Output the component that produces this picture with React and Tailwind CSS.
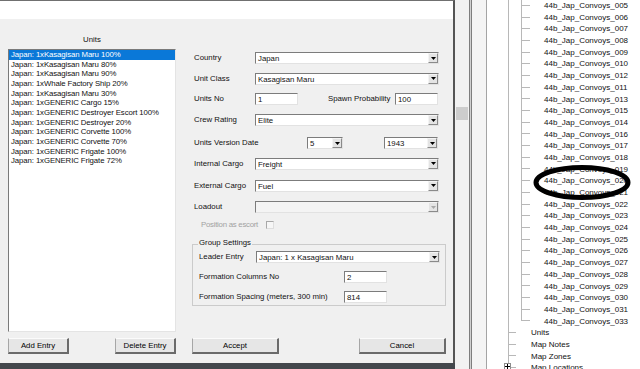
import React from 'react'

const units = [
  'Japan: 1xKasagisan Maru 100%',
  'Japan: 1xKasagisan Maru 80%',
  'Japan: 1xKasagisan Maru 90%',
  'Japan: 1xWhale Factory Ship 20%',
  'Japan: 1xKasagisan Maru 30%',
  'Japan: 1xGENERIC Cargo 15%',
  'Japan: 1xGENERIC Destroyer Escort 100%',
  'Japan: 1xGENERIC Destroyer 20%',
  'Japan: 1xGENERIC Corvette 100%',
  'Japan: 1xGENERIC Corvette 70%',
  'Japan: 1xGENERIC Frigate 100%',
  'Japan: 1xGENERIC Frigate 72%',
]

const convoys = [
  '005', '006', '007', '008', '009', '010', '012', '011', '013', '015', '014', '016', '017', '018',
  '019', '020', '021', '022', '023', '024', '025', '026', '027', '028', '029', '030', '031', '033',
]

const topLevel = ['Units', 'Map Notes', 'Map Zones', 'Map Locations']

function Arrow({ disabled }) {
  return (
    <div className="w-[10px] h-full flex items-center justify-center bg-[#e4e4e4] border-l border-t border-l-[#f4f4f4] border-t-[#f4f4f4] border-r border-b border-r-[#8a8a8a] border-b-[#8a8a8a]">
      <svg width="5" height="3" viewBox="0 0 5 3">
        <path d="M0 0H5L2.5 3Z" fill={disabled ? '#a8a8a8' : '#000'} />
      </svg>
    </div>
  )
}

function Combo({ value, w = 'w-[184px]', disabled }) {
  return (
    <div
      className={`${w} h-[12px] flex border-t border-l border-t-[#7c7c7c] border-l-[#7c7c7c] border-r border-b border-r-[#e2e2e2] border-b-[#e2e2e2] ${
        disabled ? 'bg-[#f4f4f4]' : 'bg-white'
      }`}
    >
      <span className="flex-1 pl-[2px] leading-[11px] whitespace-nowrap overflow-hidden">{value}</span>
      <Arrow disabled={disabled} />
    </div>
  )
}

function Field({ value, w = 'w-[43px]' }) {
  return (
    <div className={`${w} h-[12px] bg-white border-t border-l border-t-[#7c7c7c] border-l-[#7c7c7c] border-r border-b border-r-[#e2e2e2] border-b-[#e2e2e2] pl-[2px] leading-[11px]`}>
      {value}
    </div>
  )
}

function Btn({ children, w }) {
  return (
    <button
      className={`${w} h-[16px] bg-[#e6e6e6] border-t border-l border-t-[#fbfbfb] border-l-[#a6a6a6] border-r-2 border-b-2 border-r-[#6a6a6a] border-b-[#6a6a6a] leading-[13px] text-[7.8px] text-black`}
    >
      {children}
    </button>
  )
}

function Row({ label, lw = 'w-[63px]', children }) {
  return (
    <div className="h-[12px] flex items-center">
      <span className={`${lw} pl-[2px] whitespace-nowrap`}>{label}</span>
      {children}
    </div>
  )
}

export default function App() {
  return (
    <div className="relative w-[640px] h-[369px] overflow-hidden flex bg-white text-[7.8px] text-[#111] font-['Liberation_Sans',Arial,sans-serif]">
      {/* dialog */}
      <div className="w-[455px] h-full flex flex-col">
        <div className="h-[363px] flex flex-col border-t border-t-[#707070] border-r-2 border-r-[#555]">
          <div className="h-[18px] bg-white" />
          <div className="flex-1 bg-[#f0f0f0] flex">
            {/* units column */}
            <div className="w-[176px] pl-[8px] flex flex-col">
              <div className="mt-[16px] h-[10px] leading-[10px] text-center">Units</div>
              <div className="mt-[4px] h-[283px] bg-white border-t border-l border-t-[#7a7a7a] border-l-[#7a7a7a] border-r border-b border-r-[#e4e4e4] border-b-[#e4e4e4]">
                {units.map((u, i) => (
                  <div
                    key={i}
                    className={`h-[9.67px] leading-[9.67px] pl-[2px] whitespace-nowrap tracking-[-0.1px] ${
                      i === 0 ? 'bg-[#0a78d8] text-white' : ''
                    }`}
                  >
                    {u}
                  </div>
                ))}
              </div>
              <div className="mt-[6px] flex justify-between">
                <Btn w="w-[61px]">Add Entry</Btn>
                <Btn w="w-[61px]">Delete Entry</Btn>
              </div>
            </div>

            {/* form column */}
            <div className="ml-[16px] w-[254px] pt-[33px] flex flex-col">
              <Row label="Country">
                <Combo value="Japan" />
              </Row>
              <div className="mt-[8.5px]">
                <Row label="Unit Class">
                  <Combo value="Kasagisan Maru" />
                </Row>
              </div>
              <div className="mt-[8.5px]">
                <Row label="Units No">
                  <Field value="1" />
                  <span className="ml-[30px] w-[67px] whitespace-nowrap">Spawn Probability</span>
                  <Field value="100" />
                </Row>
              </div>
              <div className="mt-[9px]">
                <Row label="Crew Rating">
                  <Combo value="Elite" />
                </Row>
              </div>
              <div className="mt-[11px]">
                <Row label="Units Version Date" lw="w-[115px]">
                  <Combo value="5" w="w-[36px]" />
                  <div className="ml-[41px]">
                    <Combo value="1943" w="w-[54px]" />
                  </div>
                </Row>
              </div>
              <div className="mt-[8.5px]">
                <Row label="Internal Cargo">
                  <Combo value="Freight" />
                </Row>
              </div>
              <div className="mt-[10px]">
                <Row label="External Cargo">
                  <Combo value="Fuel" />
                </Row>
              </div>
              <div className="mt-[9.5px]">
                <Row label="Loadout">
                  <Combo value="" disabled />
                </Row>
              </div>
              <div className="mt-[7px] h-[10px] flex items-center pl-[9px]">
                <span className="w-[65px] text-[#a2a2a2] whitespace-nowrap tracking-[-0.25px]">Position as escort</span>
                <div className="w-[8px] h-[8px] bg-[#f6f6f6] border-t border-l border-t-[#a8a8a8] border-l-[#a8a8a8] border-r border-b border-r-[#dedede] border-b-[#dedede]" />
              </div>

              <div className="relative mt-[14px] h-[62px] border border-[#cbcbcb] pl-[6px] pt-[6px] flex flex-col">
                <span className="absolute -top-[7px] left-[5px] px-[1px] h-[10px] leading-[10px] bg-[#f0f0f0]">
                  Group Settings
                </span>
                <div className="h-[12px] flex items-center">
                  <span className="w-[57px] whitespace-nowrap">Leader Entry</span>
                  <Combo value="Japan: 1 x Kasagisan Maru" />
                </div>
                <div className="mt-[8px] h-[12px] flex items-center">
                  <span className="w-[145px] whitespace-nowrap">Formation Columns No</span>
                  <Field value="2" />
                </div>
                <div className="mt-[8px] h-[12px] flex items-center">
                  <span className="w-[145px] whitespace-nowrap">Formation Spacing (meters, 300 min)</span>
                  <Field value="814" />
                </div>
              </div>

              <div className="mt-[32px] flex justify-between">
                <Btn w="w-[87px]">Accept</Btn>
                <Btn w="w-[87px]">Cancel</Btn>
              </div>
            </div>
          </div>
        </div>
        <div className="flex-1 bg-[#43474c]" />
      </div>

      {/* strip between dialog and tree */}
      <div className="w-[14px] h-full bg-[#f2f2f2] flex flex-col">
        <div className="mt-[107px] mx-[1px] h-[13px] bg-[#cdcdcd]" />
      </div>
      <div className="w-[1px] h-full bg-[#7e7e7e]" />
      <div className="w-[1px] h-full bg-[#d0d0d0]" />
      <div className="w-[1px] h-full bg-[#7e7e7e]" />
      <div className="w-[14px] h-full bg-[#f4f4f4]" />
      <div className="w-[1px] h-full bg-[#a4a4a4]" />

      {/* tree */}
      <div className="flex-1 h-full bg-white pl-[21px]">
        <div className="h-full border-l border-l-[#b8b8b8] flex flex-col">
          <div className="ml-[12px] flex flex-col">
            {convoys.map((c, i) => (
              <div key={c} className="h-[11.7px] flex">
                <div className="w-[9px] h-full flex flex-col">
                  <div className="h-1/2 border-l border-b border-[#b8b8b8]" />
                  <div className={`h-1/2 ${i === convoys.length - 1 ? '' : 'border-l border-[#b8b8b8]'}`} />
                </div>
                <span className="ml-[14px] text-[8px] leading-[11.7px] whitespace-nowrap">44b_Jap_Convoys_{c}</span>
              </div>
            ))}
          </div>
          {topLevel.map((t, i) => (
            <div key={t} className="relative h-[11.7px] flex">
              <div className="w-[7px] h-full">
                <div className="h-1/2 border-b border-[#b8b8b8]" />
              </div>
              <span className="ml-[15px] text-[8px] leading-[11.7px] whitespace-nowrap">{t}</span>
              {i === topLevel.length - 1 && (
                <div className="absolute -left-[5px] top-[1px] w-[7px] h-[7px] bg-white border border-[#8c8c8c] flex items-center justify-center">
                  <svg width="5" height="5" viewBox="0 0 5 5">
                    <path d="M0 2.5H5M2.5 0V5" stroke="#000" strokeWidth="1" />
                  </svg>
                </div>
              )}
            </div>
          ))}
        </div>
      </div>

      {/* hand-drawn annotation */}
      <svg className="absolute left-[532px] top-[164px]" width="100" height="37" viewBox="0 0 100 37">
        <ellipse cx="50" cy="18.5" rx="46" ry="15" fill="none" stroke="#000" strokeWidth="5" />
      </svg>
    </div>
  )
}
